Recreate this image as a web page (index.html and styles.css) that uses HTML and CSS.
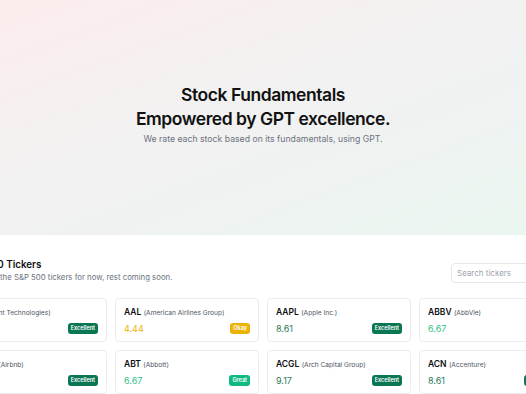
FILE: index.html
```html
<!DOCTYPE html>
<html lang="en">
<head>
    <meta charset="UTF-8">
    <meta name="viewport" content="width=device-width, initial-scale=1.0">
    <title>Stock Fundamentals</title>
    <link rel="stylesheet" href="styles.css">
</head>
<body>
    <header class="hero">
        <h1>Stock Fundamentals<br>Empowered by GPT excellence.</h1>
        <p>We rate each stock based on its fundamentals, using GPT.</p>
    </header>

    <main class="tickers">
        <div class="wrap">
            <div class="head">
                <div>
                    <h2>S&amp;P 500 Tickers</h2>
                    <p>Featuring the S&amp;P 500 tickers for now, rest coming soon.</p>
                </div>
                <input type="text" class="search" placeholder="Search tickers">
            </div>

            <div class="grid">
                <div class="card">
                    <div class="name"><b>A</b> <span>(Agilent Technologies)</span></div>
                    <div class="row"><span class="score excellent">8.61</span><span class="badge excellent">Excellent</span></div>
                </div>
                <div class="card">
                    <div class="name"><b>AAL</b> <span>(American Airlines Group)</span></div>
                    <div class="row"><span class="score okay">4.44</span><span class="badge okay">Okay</span></div>
                </div>
                <div class="card">
                    <div class="name"><b>AAPL</b> <span>(Apple Inc.)</span></div>
                    <div class="row"><span class="score excellent">8.61</span><span class="badge excellent">Excellent</span></div>
                </div>
                <div class="card">
                    <div class="name"><b>ABBV</b> <span>(AbbVie)</span></div>
                    <div class="row"><span class="score great">6.67</span><span class="badge great">Great</span></div>
                </div>
                <div class="card">
                    <div class="name"><b>ABNB</b> <span>(Airbnb)</span></div>
                    <div class="row"><span class="score excellent">8.06</span><span class="badge excellent">Excellent</span></div>
                </div>
                <div class="card">
                    <div class="name"><b>ABT</b> <span>(Abbott)</span></div>
                    <div class="row"><span class="score great">6.67</span><span class="badge great">Great</span></div>
                </div>
                <div class="card">
                    <div class="name"><b>ACGL</b> <span>(Arch Capital Group)</span></div>
                    <div class="row"><span class="score excellent">9.17</span><span class="badge excellent">Excellent</span></div>
                </div>
                <div class="card">
                    <div class="name"><b>ACN</b> <span>(Accenture)</span></div>
                    <div class="row"><span class="score excellent">8.61</span><span class="badge excellent">Excellent</span></div>
                </div>
            </div>
        </div>
    </main>
</body>
</html>
```

FILE: styles.css
```css
html, body {
    overflow: hidden;
}
body {
    font-family: Inter, 'Noto Sans', sans-serif;
    margin: 0;
    padding: 0;
    color: #111;
    background-color: #fff;
}
.hero {
    box-sizing: border-box;
    height: 235px;
    padding-top: 83px;
    text-align: center;
    background: linear-gradient(160deg, #fcecec 0%, #f3f1f1 40%, #eff2f1 65%, #eaf6f0 100%);
}
.hero h1 {
    margin: 0;
    font-size: 17.5px;
    line-height: 23.5px;
    font-weight: 600;
    letter-spacing: -0.45px;
}
.hero p {
    margin: 3px 0 0;
    font-size: 8.7px;
    line-height: 13px;
    color: #6b7280;
}
.tickers {
    display: flex;
    justify-content: center;
    padding-top: 23px;
}
.wrap {
    flex: 0 0 600px;
    width: 600px;
}
.head {
    display: flex;
    justify-content: space-between;
    align-items: flex-end;
    margin-bottom: 15px;
}
.head h2 {
    margin: 0;
    font-size: 9.8px;
    line-height: 14px;
    font-weight: 600;
}
.head p {
    margin: 0;
    font-size: 7.8px;
    line-height: 11px;
    color: #6b7280;
}
.search {
    box-sizing: border-box;
    width: 112px;
    height: 20px;
    padding: 0 5px;
    border: 1px solid #e5e7eb;
    border-radius: 4px;
    font-family: inherit;
    font-size: 8px;
    outline: none;
}
.search::placeholder {
    color: #9ca3af;
}
.grid {
    display: grid;
    grid-template-columns: repeat(4, 1fr);
    gap: 8px;
}
.card {
    border: 1px solid #ececec;
    border-radius: 4px;
    padding: 7px 8px;
}
.name {
    font-size: 8.5px;
    line-height: 12px;
    white-space: nowrap;
}
.name b {
    font-weight: 600;
}
.name span {
    font-size: 6.6px;
    color: #4b5563;
}
.row {
    display: flex;
    justify-content: space-between;
    align-items: center;
    margin-top: 4px;
    height: 11px;
}
.score {
    font-size: 9px;
}
.score.excellent { color: #1f7a57; }
.score.great { color: #2fbf86; }
.score.okay { color: #eab308; }
.badge {
    height: 11px;
    line-height: 11px;
    padding: 0 3px;
    border-radius: 3px;
    font-size: 5.5px;
    font-weight: 600;
    color: #fff;
}
.badge.excellent { background-color: #0b7654; }
.badge.great { background-color: #10b981; }
.badge.okay { background-color: #eab308; }
```
